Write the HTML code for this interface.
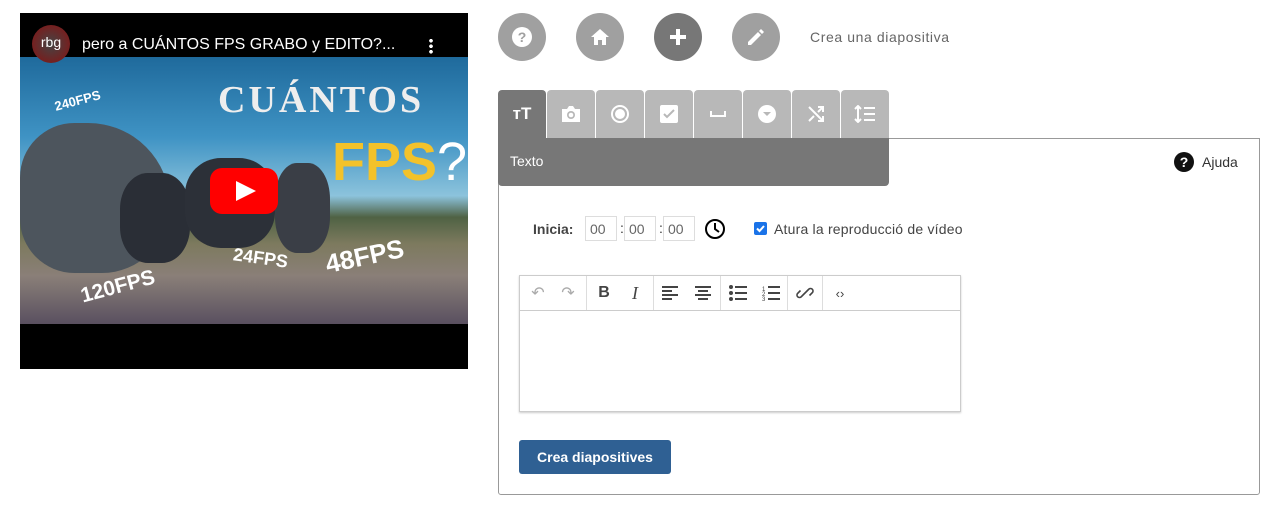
<!DOCTYPE html>
<html><head><meta charset="utf-8"><style>
*{box-sizing:border-box;margin:0;padding:0}
body{width:1288px;height:518px;background:#fff;font-family:"Liberation Sans","DejaVu Sans",sans-serif;position:relative;overflow:hidden;color:#333}
.abs{position:absolute}
.circ{position:absolute;top:13px;width:48px;height:48px;border-radius:50%;background:#a0a0a0;display:flex;align-items:center;justify-content:center}
.tab{position:absolute;top:90px;width:48px;height:48px;background:#b8b8b8;border-radius:4px 4px 0 0;display:flex;align-items:center;justify-content:center}
.tb{position:absolute;top:276px;height:34px;display:flex;align-items:center;justify-content:center;font-size:16px;color:#444}
.sep{position:absolute;top:276px;width:1px;height:34px;background:#ddd}
.vt{position:absolute;color:#fff;font-weight:bold;font-family:"Liberation Sans Narrow","Liberation Sans",sans-serif;white-space:nowrap}
</style></head><body>
<!-- video -->
<div class="abs" style="left:20px;top:13px;width:448px;height:356px;background:#000;overflow:hidden">
 <div class="abs" style="left:0;top:44px;width:448px;height:267px;background:linear-gradient(180deg,#1f6a9c 0%,#3f93c4 30%,#8cc3dc 52%,#4f6244 60%,#7d7a5e 70%,#8a7f78 82%,#5a5060 100%)"></div>
 <div class="abs" style="left:0;top:110px;width:150px;height:150px;background:#4d555d;border-radius:40% 60% 50% 40%"></div>
 <div class="abs" style="left:100px;top:160px;width:70px;height:90px;background:#2a2e36;border-radius:40%"></div>
 <div class="abs" style="left:165px;top:145px;width:90px;height:90px;background:#2c3038;border-radius:40%"></div>
 <div class="abs" style="left:255px;top:150px;width:55px;height:90px;background:#3a3e46;border-radius:40%"></div>
 <div class="vt" style="left:198px;top:65px;font-size:38px;letter-spacing:3px;color:#eee;font-family:'Liberation Serif',serif">CUÁNTOS</div>
 <div class="vt" style="left:312px;top:118px;font-size:54px;color:#f3c22a">FPS<span style="color:#fff;font-weight:normal">?</span></div>
 <div class="vt" style="left:34px;top:80px;font-size:13px;transform:rotate(-15deg)">240FPS</div>
 <div class="vt" style="left:60px;top:262px;font-size:21px;transform:rotate(-15deg)">120FPS</div>
 <div class="vt" style="left:213px;top:235px;font-size:18px;transform:rotate(8deg)">24FPS</div>
 <div class="vt" style="left:305px;top:228px;font-size:26px;transform:rotate(-12deg)">48FPS</div>
 <div class="abs" style="left:190px;top:155px;width:68px;height:46px;background:#f00;border-radius:12px"></div>
 <svg class="abs" style="left:216px;top:168px" width="20" height="20"><path d="M0 0L20 10L0 20Z" fill="#fff"/></svg>
 <div class="abs" style="left:0;top:0;width:448px;height:44px;background:#000"></div>
 <div class="abs" style="left:12px;top:12px;width:38px;height:38px;border-radius:50%;background:radial-gradient(#444,#8a1010);color:#fff;font-size:14px;text-align:center;line-height:34px">rbg</div>
 <div class="abs" style="left:62px;top:23px;color:#fff;font-size:16px">pero a CUÁNTOS FPS GRABO y EDITO?...</div>
 <div class="abs" style="left:409px;top:25px;width:4px;height:16px;background:radial-gradient(circle,#fff 1.7px,transparent 2px) 0 0/4px 5.5px"></div>
</div>
<!-- circles -->
<div class="circ" style="left:498px"><svg width="22" height="22" viewBox="0 0 22 22"><circle cx="11" cy="11" r="10" fill="#fff"/><text x="11" y="16" font-size="14" font-weight="bold" text-anchor="middle" fill="#a0a0a0" font-family="Liberation Sans">?</text></svg></div>
<div class="circ" style="left:576px"><svg width="20" height="18"><path d="M10 1L1 9h3v8h4v-5h4v5h4V9h3z" fill="#fff"/></svg></div>
<div class="circ" style="left:654px;background:#777"><svg width="18" height="18"><path d="M7 1h4v6h6v4h-6v6H7v-6H1V7h6z" fill="#fff"/></svg></div>
<div class="circ" style="left:732px"><svg width="20" height="20"><path d="M2 15v3h3L15 8l-3-3zM13 4l3 3 2-2-3-3z" fill="#fff"/></svg></div>
<div class="abs" style="left:810px;top:29px;font-size:14px;color:#666;letter-spacing:.6px">Crea una diapositiva</div>
<!-- panel -->
<div class="abs" style="left:498px;top:138px;width:762px;height:357px;border:1px solid #999;border-radius:0 0 3px 3px"></div>
<div class="abs" style="left:498px;top:138px;width:391px;height:48px;background:#777;border-radius:0 0 4px 4px"></div>
<div class="abs" style="left:510px;top:153px;color:#fff;font-size:14px">Texto</div>
<div class="tab" style="left:498px;background:#777"><span style="color:#fff;font-weight:bold;font-size:17px">ᴛT</span></div>
<div class="tab" style="left:547px"><svg width="20" height="18"><path d="M1 4h5l2-3h4l2 3h5v13H1z" fill="#fff"/><circle cx="10" cy="10" r="4" fill="#b8b8b8"/><circle cx="10" cy="10" r="2.3" fill="#fff"/></svg></div>
<div class="tab" style="left:596px"><svg width="20" height="20"><circle cx="10" cy="10" r="8" fill="none" stroke="#fff" stroke-width="2"/><circle cx="10" cy="10" r="5" fill="#fff"/></svg></div>
<div class="tab" style="left:645px"><svg width="18" height="18"><rect width="18" height="18" rx="2" fill="#fff"/><path d="M4 9l3 3 7-7" stroke="#b8b8b8" stroke-width="2" fill="none"/></svg></div>
<div class="tab" style="left:694px"><svg width="16" height="8"><path d="M1 1v5h14V1" stroke="#fff" stroke-width="2" fill="none"/></svg></div>
<div class="tab" style="left:743px"><svg width="20" height="20"><circle cx="10" cy="10" r="9" fill="#fff"/><path d="M6 8h8l-4 4z" fill="#b8b8b8"/></svg></div>
<div class="tab" style="left:792px"><svg width="18" height="18"><path d="M2 2l14 14M11 16h5v-5M2 16l5-5M11 7l5-5M11 2h5v5" stroke="#fff" stroke-width="2" fill="none"/></svg></div>
<div class="tab" style="left:841px"><svg width="22" height="18"><path d="M4 1v16M1 4l3-3 3 3M1 14l3 3 3-3M10 3h11M10 9h11M10 15h11" stroke="#fff" stroke-width="2" fill="none"/></svg></div>
<div class="abs" style="left:1174px;top:152px;width:20px;height:20px;border-radius:50%;background:#111;color:#fff;font-weight:bold;font-size:14px;text-align:center;line-height:20px">?</div>
<div class="abs" style="left:1202px;top:154px;font-size:14px;color:#333">Ajuda</div>
<!-- time -->
<div class="abs" style="left:533px;top:221px;font-size:14px;font-weight:bold;color:#444">Inicia:</div>
<div class="abs" style="left:585px;top:216px;width:32px;height:25px;border:1px solid #ddd;font-size:14px;color:#666;padding:4px 0 0 4px">00</div>
<div class="abs" style="left:620px;top:220px;font-size:14px">:</div>
<div class="abs" style="left:624px;top:216px;width:32px;height:25px;border:1px solid #ddd;font-size:14px;color:#666;padding:4px 0 0 4px">00</div>
<div class="abs" style="left:659px;top:220px;font-size:14px">:</div>
<div class="abs" style="left:663px;top:216px;width:32px;height:25px;border:1px solid #ddd;font-size:14px;color:#666;padding:4px 0 0 4px">00</div>
<svg class="abs" style="left:704px;top:218px" width="22" height="22"><circle cx="11" cy="11" r="9" fill="none" stroke="#000" stroke-width="2"/><path d="M11 5v6l4 3" stroke="#000" stroke-width="2" fill="none"/></svg>
<svg class="abs" style="left:754px;top:222px" width="13" height="13"><rect width="13" height="13" rx="2" fill="#1a73e8"/><path d="M3 6.5l2.5 2.5 4.5-5" stroke="#fff" stroke-width="2" fill="none"/></svg>
<div class="abs" style="left:774px;top:221px;font-size:14px;color:#444;letter-spacing:.2px">Atura la reproducció de vídeo</div>
<!-- editor -->
<div class="abs" style="left:519px;top:275px;width:442px;height:137px;border:1px solid #ccc;box-shadow:0 1px 2px rgba(0,0,0,.2)"></div>
<div class="abs" style="left:520px;top:310px;width:440px;height:1px;background:#ccc"></div>
<div class="tb" style="left:528px;width:20px;color:#aaa">↶</div>
<div class="tb" style="left:558px;width:20px;color:#aaa">↷</div>
<div class="sep" style="left:586px"></div>
<div class="tb" style="left:594px;width:20px;font-weight:bold">B</div>
<div class="tb" style="left:625px;width:20px;font-style:italic;font-family:'Liberation Serif',serif;font-size:18px">I</div>
<div class="sep" style="left:653px"></div>
<svg class="abs" style="left:662px;top:286px" width="16" height="14"><path d="M0 1h16M0 5h10M0 9h16M0 13h10" stroke="#444" stroke-width="2"/></svg>
<svg class="abs" style="left:695px;top:286px" width="16" height="14"><path d="M0 1h16M3 5h10M0 9h16M3 13h10" stroke="#444" stroke-width="2"/></svg>
<div class="sep" style="left:720px"></div>
<svg class="abs" style="left:729px;top:285px" width="18" height="16"><circle cx="2" cy="2" r="2" fill="#444"/><circle cx="2" cy="8" r="2" fill="#444"/><circle cx="2" cy="14" r="2" fill="#444"/><path d="M6 2h12M6 8h12M6 14h12" stroke="#444" stroke-width="2"/></svg>
<svg class="abs" style="left:762px;top:285px" width="18" height="16"><text x="0" y="6" font-size="6" fill="#444">1</text><text x="0" y="11" font-size="6" fill="#444">2</text><text x="0" y="16" font-size="6" fill="#444">3</text><path d="M6 2h12M6 8h12M6 14h12" stroke="#444" stroke-width="2"/></svg>
<div class="sep" style="left:787px"></div>
<svg class="abs" style="left:796px;top:284px" width="18" height="18"><path d="M8 10l-3 3a2.5 2.5 0 0 1-3.5-3.5l3-3M10 8l3-3a2.5 2.5 0 0 1 3.5 3.5l-3 3M6 12l6-6" stroke="#444" stroke-width="1.6" fill="none"/></svg>
<div class="sep" style="left:822px"></div>
<div class="tb" style="left:830px;width:20px;font-size:13px">‹›</div>
<div class="abs" style="left:519px;top:440px;width:152px;height:34px;background:#2f6093;border-radius:3px;color:#fff;font-weight:bold;font-size:14px;text-align:center;line-height:34px">Crea diapositives</div>
</body></html>
